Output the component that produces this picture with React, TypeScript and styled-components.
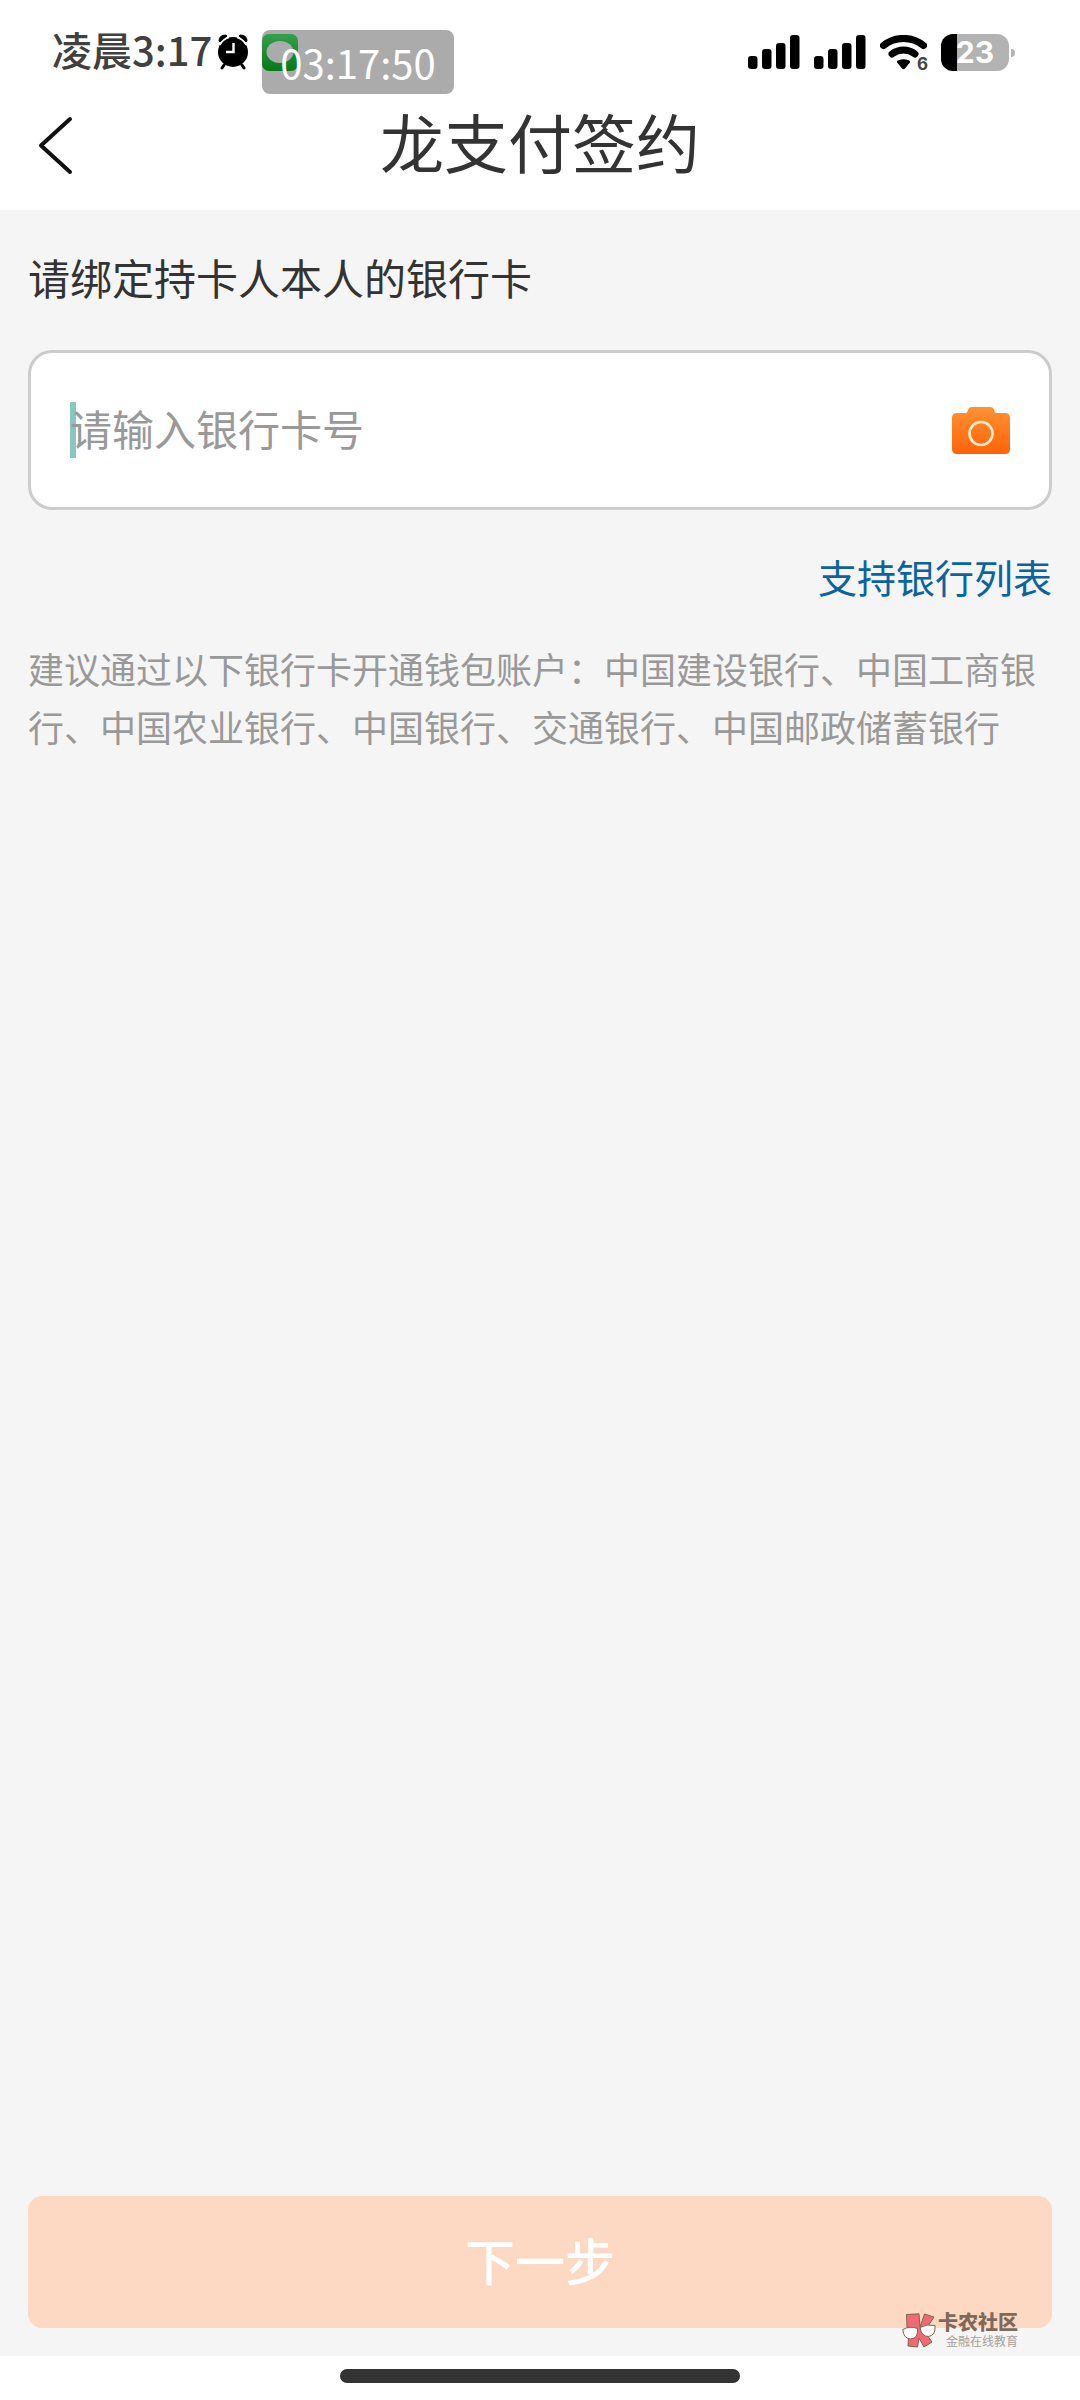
import React, { useState } from "react";
import styled, { createGlobalStyle } from "styled-components";

const GlobalStyle = createGlobalStyle`
  *, *::before, *::after { box-sizing: border-box; }
  body {
    margin: 0;
    background: #f5f5f5;
    font-family: "Noto Sans CJK SC", "Noto Sans", sans-serif;
    color: #333333;
  }
  svg { display: block; flex: none; }
`;

const Page = styled.div`
  position: relative;
  display: flex;
  flex-direction: column;
  min-height: 100vh;
`;

const Header = styled.header`
  background: #ffffff;
  padding-bottom: 24px;
`;

const StatusBar = styled.div`
  display: flex;
  justify-content: space-between;
  align-items: center;
  height: 94px;
  padding: 10px 71px 0 52px;
`;

const StatusGroup = styled.div<{ $gap: number }>`
  display: flex;
  align-items: center;
  gap: ${(p) => p.$gap}px;
`;

const StatusTime = styled.span`
  font-size: 40px;
  font-weight: 500;
  line-height: 40px;
  padding-bottom: 6px;
  margin-right: 6px;
  color: #404040;
`;

const RunningApp = styled.span`
  position: relative;
  display: block;
  margin-left: 14px;
`;

const Stamp = styled.span`
  position: absolute;
  top: -4px;
  left: 0;
  padding: 0 18px;
  border-radius: 8px;
  background: rgba(0, 0, 0, 0.33);
  color: #ffffff;
  font-size: 40px;
  line-height: 64px;
  white-space: nowrap;
`;

const Battery = styled.span`
  position: relative;
  display: flex;
  align-items: center;
  justify-content: center;
  width: 68px;
  height: 37px;
  border-radius: 12px;
  background: linear-gradient(to right, #000000 16px, #b3b3b3 16px);
  color: #ffffff;
  font-family: Inter, "Liberation Sans", sans-serif;
  font-size: 30px;
  font-weight: 700;
  line-height: 36px;

  &::after {
    content: "";
    position: absolute;
    right: -6px;
    top: 15px;
    width: 4px;
    height: 8px;
    border-radius: 0 4px 4px 0;
    background: #b3b3b3;
  }
`;

const NavBar = styled.nav`
  display: grid;
  grid-template-columns: 96px 1fr 96px;
  align-items: center;
  height: 92px;
`;

const BackButton = styled.button`
  display: flex;
  align-items: center;
  height: 92px;
  padding: 10px 0 0 36px;
  border: 0;
  background: none;
`;

const Title = styled.h1`
  margin: 0;
  text-align: center;
  font-size: 64px;
  font-weight: 400;
  line-height: 92px;
`;

const Form = styled.form`
  flex: 1;
  display: flex;
  flex-direction: column;
  padding: 36px 28px 28px;
`;

const FieldLabel = styled.label`
  font-size: 42px;
  line-height: 62px;
`;

const Field = styled.div`
  position: relative;
  display: flex;
  align-items: center;
  height: 160px;
  margin-top: 42px;
  padding: 0 39px;
  border: 3px solid #cccccc;
  border-radius: 24px;
  background: #ffffff;
`;

const Caret = styled.span`
  position: absolute;
  left: 39px;
  top: 49px;
  width: 6px;
  height: 56px;
  background: #86c7c0;
`;

const CardInput = styled.input`
  position: relative;
  flex: 1;
  min-width: 0;
  height: 100%;
  padding: 0 0 6px;
  border: 0;
  outline: 0;
  background: transparent;
  font: inherit;
  font-size: 42px;
  color: #333333;

  &::placeholder {
    color: #999999;
    opacity: 1;
  }
`;

const ScanButton = styled.button`
  padding: 0;
  border: 0;
  background: none;
`;

const BankLink = styled.a`
  align-self: flex-end;
  margin-top: 40px;
  font-size: 39px;
  line-height: 52px;
  color: #0b64a0;
  text-decoration: none;
`;

const Hint = styled.p`
  margin: 37px 0 0;
  font-size: 36px;
  line-height: 58px;
  color: #999999;
`;

const NextButton = styled.button`
  width: 100%;
  height: 132px;
  margin-top: auto;
  padding: 0 0 6px;
  border: 0;
  border-radius: 14px;
  background: #fdd9c3;
  color: #ffffff;
  font: inherit;
  font-size: 50px;
  font-weight: 500;
`;

const HomeArea = styled.footer`
  display: flex;
  justify-content: center;
  height: 44px;
  padding-top: 13px;
  background: #ffffff;
`;

const HomeBar = styled.div`
  width: 37%;
  height: 14px;
  border-radius: 7px;
  background: #333333;
`;

const Watermark = styled.div`
  position: absolute;
  right: 62px;
  bottom: 50px;
  display: flex;
  align-items: center;
  gap: 2px;
  font-family: "Liberation Sans", "Noto Sans CJK SC", sans-serif;
`;

const WatermarkText = styled.div`
  display: flex;
  flex-direction: column;
  align-items: flex-end;
`;

const WatermarkName = styled.span`
  font-size: 20px;
  font-weight: 900;
  line-height: 22px;
  color: #81695a;
`;

const WatermarkTag = styled.span`
  font-size: 12px;
  line-height: 16px;
  color: #a8a09b;
`;

const AlarmIcon = () => (
  <svg width="30" height="36" viewBox="0 0 30 36" aria-hidden="true">
    <path d="M1 7Q1 1 8 1L9 2 2 8ZM29 7Q29 1 22 1L21 2 28 8Z" fill="#000" stroke="#000" />
    <circle cx="15" cy="18" r="15" fill="#000" />
    <path d="M2 11Q5 5 11 3.500M28 11Q25 5 19 3.500" stroke="#fff" strokeWidth="1.500" fill="none" />
    <path d="M6 31L4 34M24 31L26 34" stroke="#000" strokeWidth="3" strokeLinecap="round" />
    <path d="M15.500 9V18H8" stroke="#fff" strokeWidth="2.400" fill="none" />
  </svg>
);

const ChatIcon = () => (
  <svg width="36" height="37" viewBox="0 0 36 37" aria-hidden="true">
    <defs>
      <linearGradient id="chat" x1="0" y1="0" x2="0" y2="1">
        <stop offset="0" stopColor="#4df06f" />
        <stop offset="1" stopColor="#0bb427" />
      </linearGradient>
    </defs>
    <rect width="36" height="37" rx="7" fill="url(#chat)" />
    <path d="M18 7C10 7 4.500 12 4.500 18C4.500 24 10 29 18 29C25.500 29 31.500 24 31.500 18C31.500 12 26 7 18 7Z" fill="#fff" />
  </svg>
);

const SignalIcon = () => (
  <svg width="52" height="34" viewBox="0 0 52 34" aria-hidden="true">
    <rect x="0" y="21" width="9.500" height="13" rx="3" />
    <rect x="14" y="14" width="9.500" height="20" rx="3" />
    <rect x="28" y="8" width="9.500" height="26" rx="3" />
    <rect x="42" y="0" width="9.500" height="34" rx="3" />
  </svg>
);

const WifiBox = styled.span`
  position: relative;
  display: block;
`;

const WifiGeneration = styled.span`
  position: absolute;
  right: -1px;
  bottom: -3px;
  font-family: Inter, "Liberation Sans", sans-serif;
  font-size: 17px;
  font-weight: 700;
  line-height: 18px;
  color: #444444;
`;

const WifiIcon = () => (
  <svg width="47" height="35" viewBox="0 0 47 35" fill="none" stroke="#000" aria-hidden="true">
    <path d="M3.500 10.500C15 1 32 1 43.500 10.500" strokeWidth="7" strokeLinecap="round" />
    <path d="M12 19C19 13.800 28 13.800 35 19" strokeWidth="7" strokeLinecap="round" />
    <path d="M17.500 28Q16 26 18.500 25.200Q23.500 23.500 28.500 25.200Q31 26 29.500 28L25 33.500Q23.500 35 22 33.500Z" fill="#000" stroke="none" />
  </svg>
);

const BackIcon = () => (
  <svg width="40" height="60" viewBox="0 0 40 60" aria-hidden="true">
    <path d="M34 4L5 30.500L34 57" fill="none" stroke="#111" strokeWidth="4" strokeLinecap="round" strokeLinejoin="round" />
  </svg>
);

const CameraIcon = () => (
  <svg width="58" height="47" viewBox="0 0 58 47" aria-hidden="true">
    <defs>
      <linearGradient id="camera" x1="0" y1="0" x2="0" y2="1">
        <stop offset="0" stopColor="#ff9233" />
        <stop offset="1" stopColor="#ff6308" />
      </linearGradient>
    </defs>
    <path d="M5 6H13C15 6 15.500 5 16 3C16.500 1 17.500 0 20 0H38C40.500 0 41.500 1 42 3C42.500 5 43 6 45 6H53Q58 6 58 11V42Q58 47 53 47H5Q0 47 0 42V11Q0 6 5 6Z" fill="url(#camera)" />
    <circle cx="29" cy="26.500" r="11.500" fill="none" stroke="#ffedc8" strokeWidth="2.600" />
  </svg>
);

const WatermarkLogo = () => (
  <svg width="34" height="36" viewBox="0 0 34 36" stroke="#86604f" strokeWidth="1" strokeLinejoin="round" aria-hidden="true">
    <path d="M4.500 1.500L17 .800L18 14L22.500 1L32 4L26 13L25 22L30 29L22 34L17 25L15.500 34L6 33L6.500 24L5 14Z" fill="#f06a74" />
    <path d="M.800 16.500Q8 12.500 15.500 15.500Q16.500 25.500 8.500 26Q1.500 25.500 .800 16.500Z" fill="#fff" />
    <path d="M18 14.500Q25 10.500 33 12.500Q34 22.500 26.500 23.500Q19.500 23.500 18 14.500Z" fill="#fff" />
  </svg>
);

export default function App() {
  const [cardNumber, setCardNumber] = useState("");

  return (
    <Page>
      <GlobalStyle />
      <Header>
        <StatusBar>
          <StatusGroup $gap={0}>
            <StatusTime>凌晨3:17</StatusTime>
            <AlarmIcon />
            <RunningApp>
              <ChatIcon />
              <Stamp>03:17:50</Stamp>
            </RunningApp>
          </StatusGroup>
          <StatusGroup $gap={14}>
            <SignalIcon />
            <SignalIcon />
            <WifiBox>
              <WifiIcon />
              <WifiGeneration>6</WifiGeneration>
            </WifiBox>
            <Battery>23</Battery>
          </StatusGroup>
        </StatusBar>
        <NavBar>
          <BackButton type="button" aria-label="返回">
            <BackIcon />
          </BackButton>
          <Title>龙支付签约</Title>
        </NavBar>
      </Header>

      <Form onSubmit={(e) => e.preventDefault()}>
        <FieldLabel htmlFor="card-number">请绑定持卡人本人的银行卡</FieldLabel>
        <Field>
          <Caret />
          <CardInput
            id="card-number"
            inputMode="numeric"
            placeholder="请输入银行卡号"
            value={cardNumber}
            onChange={(e) => setCardNumber(e.target.value)}
          />
          <ScanButton type="button" aria-label="扫描银行卡">
            <CameraIcon />
          </ScanButton>
        </Field>
        <BankLink href="#banks">支持银行列表</BankLink>
        <Hint>
          建议通过以下银行卡开通钱包账户：中国建设银行、中国工商银行、中国农业银行、中国银行、交通银行、中国邮政储蓄银行
        </Hint>
        <NextButton type="submit">下一步</NextButton>
      </Form>

      <HomeArea>
        <HomeBar />
      </HomeArea>

      <Watermark>
        <WatermarkLogo />
        <WatermarkText>
          <WatermarkName>卡农社区</WatermarkName>
          <WatermarkTag>金融在线教育</WatermarkTag>
        </WatermarkText>
      </Watermark>
    </Page>
  );
}
